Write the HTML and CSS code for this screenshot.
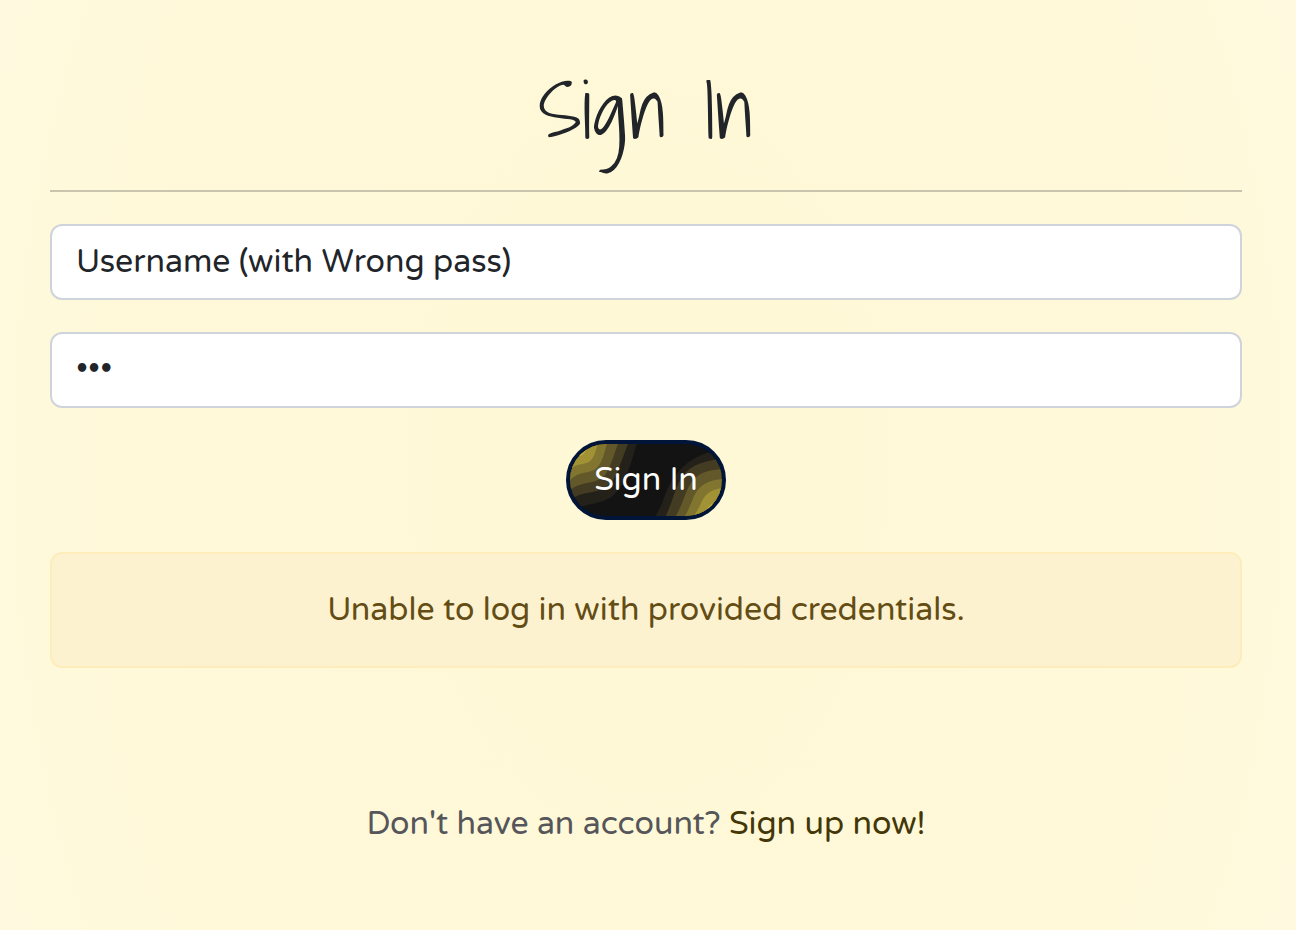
FILE: index.html
```html
<!DOCTYPE html>
<html lang="en">
<head>
<meta charset="utf-8">
<meta name="viewport" content="width=device-width, initial-scale=1">
<title>Sign In</title>
<link rel="stylesheet" href="styles.css">
</head>
<body>
<main class="page">
  <h1 class="title">Sign In</h1>
  <hr class="rule">
  <form class="form">
    <input class="field" type="text" name="username" aria-label="Username" value="Username (with Wrong pass)">
    <input class="field" type="password" name="password" aria-label="Password" value="abc">
    <button class="submit" type="button">
      <svg class="waves" viewBox="0 0 152 72" preserveAspectRatio="none" aria-hidden="true">
        <path fill="#24201a" d="M0 0H67C64 8 63 15 60 22C57 30 55 38 49 45C44 52 38 56 30 58C19 61 10 62 0 66Z"/>
        <path fill="#433b22" d="M0 0H58C55 8 52 16 49 24C46 32 43 38 37 42C25 51 14 46 0 56Z"/>
        <path fill="#625829" d="M0 0H48C45 8 43 15 40 22C37 29 34 34 28 36C20 40 10 38 0 46Z"/>
        <path fill="#827530" d="M0 0H37C35 6 34 12 31 18C24 33 12 24 0 36Z"/>
        <path fill="#a29236" d="M0 0H28C26 5 25 11 22 15C16 23 8 17 0 26Z"/>
        <path fill="#c3b03d" d="M0 0H18C17 5 15 9 12 11C8 13 4 12 0 16Z"/>
        <path fill="#24201a" d="M152 72H86C89 66 92 60 94 54C98 45 100 38 106 31C116 18 128 11 143 7L152 4Z"/>
        <path fill="#433b22" d="M152 72H96C99 65 102 58 104 51C107 43 109 37 113 32C122 20 137 16 152 15Z"/>
        <path fill="#625829" d="M152 72H106C109 67 111 62 113 57C117 47 119 41 123 37C130 27 142 26 152 25Z"/>
        <path fill="#827530" d="M152 72H115C118 68 119 64 121 60C125 50 127 46 132 42C138 37 145 36 152 35Z"/>
        <path fill="#a29236" d="M152 72H124C127 68 129 64 131 60C134 52 139 46 152 44Z"/>
        <path fill="#c3b03d" d="M152 72H134C136 67 138 63 141 61C144 58 148 58 152 54Z"/>
      </svg>
      <span class="submit-label">Sign In</span>
    </button>
  </form>
  <div class="alert" role="alert">Unable to log in with provided credentials.</div>
  <p class="signup">Don't have an account? <a class="signup-link" href="#signup">Sign up now!</a></p>
</main>
</body>
</html>
```
FILE: styles.css
```css
* { box-sizing: border-box; }

body {
  margin: 0;
  min-height: 100vh;
  background: radial-gradient(ellipse 60% 130% at 50% 50%, #fef8d6, #fff9da 70%, #fff9e1);
  color: #212529;
  font-family: "Varela Round", "Noto Sans", sans-serif;
  font-size: 32px;
  line-height: 48px;
}

.page { padding: 62px 54px 64px 50px; }

.title {
  margin: 0 0 32px;
  font-family: "Shadows Into Light", cursive;
  font-size: 80px;
  font-weight: 400;
  line-height: 96px;
  text-align: center;
}

.rule {
  height: 2px;
  margin: 0 0 32px;
  border: 0;
  background: #c8c4ae;
}

.form {
  display: flex;
  flex-direction: column;
  align-items: center;
  gap: 32px;
}

.field {
  width: 100%;
  height: 76px;
  padding: 12px 24px;
  border: 2px solid #ced4da;
  border-radius: 12px;
  background: #fff;
  color: inherit;
  font: inherit;
}

.submit {
  position: relative;
  overflow: hidden;
  height: 80px;
  padding: 12px 24px;
  border: 4px solid #001537;
  border-radius: 40px;
  background: #131313;
  color: #fff;
  font: inherit;
}

.waves {
  position: absolute;
  inset: 0;
  width: 100%;
  height: 100%;
}

.submit-label { position: relative; }

.alert {
  margin-top: 32px;
  padding: 32px;
  border: 2px solid #feecba;
  border-radius: 12px;
  background: #fdf2d0;
  color: #644d14;
  text-align: center;
}

.signup {
  margin: 132px 0 0;
  color: #56565a;
  text-align: center;
}

.signup-link {
  color: #433708;
  text-decoration: none;
}
```
